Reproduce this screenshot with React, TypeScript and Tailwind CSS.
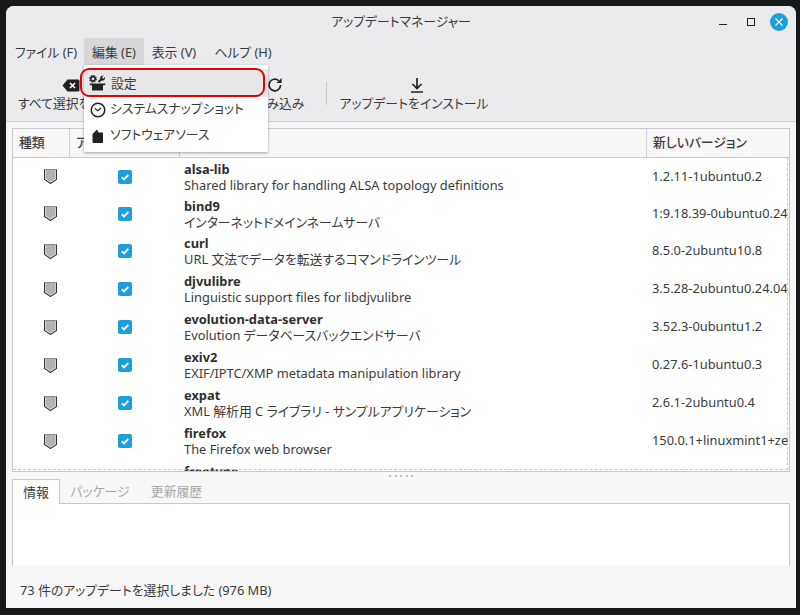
const packages = [
  { name: "alsa-lib", desc: "Shared library for handling ALSA topology definitions", version: "1.2.11-1ubuntu0.2", rowClass: "h-[37px]", textClass: "mt-[1px]" },
  { name: "bind9", desc: "インターネットドメインネームサーバ", version: "1:9.18.39-0ubuntu0.24.04.2", rowClass: "h-[37px]", textClass: "mt-[1px]" },
  { name: "curl", desc: "URL 文法でデータを転送するコマンドラインツール", version: "8.5.0-2ubuntu10.8", rowClass: "h-[38px]", textClass: "mt-[-1px]" },
  { name: "djvulibre", desc: "Linguistic support files for libdjvulibre", version: "3.5.28-2ubuntu0.24.04.1", rowClass: "h-[38px]", textClass: "mt-[-1px]" },
  { name: "evolution-data-server", desc: "Evolution データベースバックエンドサーバ", version: "3.52.3-0ubuntu1.2", rowClass: "h-[38px]", textClass: "mt-[-1px]" },
  { name: "exiv2", desc: "EXIF/IPTC/XMP metadata manipulation library", version: "0.27.6-1ubuntu0.3", rowClass: "h-[38px]", textClass: "mt-[-1px]" },
  { name: "expat", desc: "XML 解析用 C ライブラリ - サンプルアプリケーション", version: "2.6.1-2ubuntu0.4", rowClass: "h-[38px]", textClass: "mt-[-1px]" },
  { name: "firefox", desc: "The Firefox web browser", version: "150.0.1+linuxmint1+zena", rowClass: "h-[38px]", textClass: "mt-[-1px]" },
  { name: "freetype", desc: "FreeType 2 font engine", version: "2.13.2+dfsg-1ubuntu0.1", rowClass: "h-[38px]", textClass: "mt-[-1px]" },
];

const Shield = () => (
  <svg width="13" height="15" viewBox="0 0 13 15">
    <path d="M0.5 0.5 H12.5 V10.5 L6.5 14.5 L0.5 10.5 Z" fill="#fff" />
    <path d="M1.5 1 H11.5 V9.8 L6.5 13 L1.5 9.8 Z" fill="#b2b2b2" />
    <path d="M0.5 0.5 H12.5" stroke="#8c8c8c" strokeWidth="1" />
    <path d="M0.5 0.5 V10.5 L6.5 14.5 L12.5 10.5 V0.5" fill="none" stroke="#333" strokeWidth="1.1" />
  </svg>
);

const Check = () => (
  <div className="flex h-[14px] w-[14px] items-center justify-center rounded-[2px] bg-[#1f9ede]">
    <svg width="10" height="10" viewBox="0 0 10 10">
      <path d="M1.8 5.2 L4.1 7.4 L8.3 2.9" fill="none" stroke="#fff" strokeWidth="1.9" />
    </svg>
  </div>
);

const App = () => {
  return (
    <div className="h-[615px] w-[800px] overflow-hidden bg-[#17181a] pl-[6px] pt-[6px] font-['Noto_Sans','Noto_Sans_CJK_JP',sans-serif] text-[12.85px] text-[#3b3b3b] [font-feature-settings:'palt']">
      <div className="relative flex h-[602px] w-[790px] flex-col overflow-hidden rounded-t-[8px] bg-[#f7f7f7]">
        {/* title + menu + toolbar */}
        <div className="h-[116px] border-b border-[#d0d0d4] bg-[#ebebed]">
          <div className="relative flex h-[32px] items-center justify-center">
            アップデートマネージャー
            <div className="absolute left-[713px] top-[7px] flex items-center">
              <div className="mt-[5px] h-[1.5px] w-[8px] bg-[#222]" />
              <div className="ml-[20px] h-[8px] w-[8px] border-[1.5px] border-[#222]" />
              <div className="ml-[15px] flex h-[18px] w-[18px] items-center justify-center rounded-full bg-[#1f9ede]">
                <svg width="10" height="10" viewBox="0 0 10 10">
                  <path d="M1.5 1.5 L8.5 8.5 M8.5 1.5 L1.5 8.5" stroke="#fff" strokeWidth="1.1" />
                </svg>
              </div>
            </div>
          </div>
          <div className="flex h-[27px] pl-[2px]">
            <div className="flex w-[76px] items-center justify-center pt-[2px]">ファイル (F)</div>
            <div className="flex w-[60px] items-center justify-center bg-[#d7d7d9] pt-[2px]">編集 (E)</div>
            <div className="flex w-[60px] items-center justify-center pt-[2px]">表示 (V)</div>
            <div className="flex w-[78px] items-center justify-center pt-[2px]">ヘルプ (H)</div>
          </div>
          <div className="flex h-[56px] pl-[12px] pt-[11px]">
            <div className="flex w-[108px] flex-col items-center">
              <div className="flex h-[18px] items-center">
                <svg className="mr-[2px]" width="18" height="13" viewBox="0 0 18 13">
                  <path d="M5.5 0.5 H16 a1.5 1.5 0 0 1 1.5 1.5 V11 a1.5 1.5 0 0 1 -1.5 1.5 H5.5 L0.5 6.5 Z" fill="#222" />
                  <path d="M8 4 L13 9 M13 4 L8 9" stroke="#fff" strokeWidth="1.6" />
                </svg>
              </div>
              <div className="mr-[10px] whitespace-nowrap">すべて選択を解除</div>
            </div>
            <div className="ml-[118px] flex w-[60px] flex-col items-center">
              <div className="ml-[2px] flex h-[18px] items-center">
                <svg width="16" height="16" viewBox="0 0 16 16">
                  <path d="M13.6 8 A5.8 5.8 0 1 1 11.6 3.6" fill="none" stroke="#222" strokeWidth="1.7" />
                  <path d="M14.6 0.9 V6 H9.5 Z" fill="#222" />
                </svg>
              </div>
              <div className="mr-[3px] whitespace-nowrap">再読み込み</div>
            </div>
            <div className="ml-[22px] mt-[6px] h-[23px] w-px bg-[#c9c9cc]" />
            <div className="ml-[13px] flex w-[148px] flex-col items-center">
              <div className="ml-[6px] flex h-[18px] items-center">
                <svg width="14" height="17" viewBox="0 0 14 17">
                  <path d="M7 1 V11 M2.5 7 L7 11.5 L11.5 7" fill="none" stroke="#222" strokeWidth="1.7" />
                  <path d="M1 15 H13" stroke="#222" strokeWidth="1.7" />
                </svg>
              </div>
              <div className="whitespace-nowrap">アップデートをインストール</div>
            </div>
          </div>
        </div>

        {/* update list */}
        <div className="mx-[6px] mt-[6px] h-[344px] shrink-0 border border-[#c8c8cc] bg-white">
          <div className="relative h-full overflow-hidden">
            <div className="flex h-[29px] border-b border-[#c8c8cc] bg-[#f7f7f7] font-medium">
              <div className="flex w-[57px] shrink-0 items-center border-r border-[#d0d0d4] pl-[6px]">種類</div>
              <div className="flex w-[110px] shrink-0 items-center border-r border-[#d0d0d4] pl-[6px]">アップグレード</div>
              <div className="flex w-[467px] shrink-0 items-center border-r border-[#d0d0d4] pl-[6px]">パッケージ</div>
              <div className="flex flex-1 items-center pl-[6px]">新しいバージョン</div>
            </div>
            {packages.map((pkg) => (
              <div key={pkg.name} className={`flex items-center whitespace-nowrap ${pkg.rowClass}`}>
                <div className="flex w-[74px] shrink-0 justify-center"><Shield /></div>
                <div className="flex w-[76px] shrink-0 justify-center"><Check /></div>
                <div className={`ml-[21px] w-[467px] shrink-0 leading-[16px] ${pkg.textClass}`}>
                  <div className="font-bold text-[#2e2e2e]">{pkg.name}</div>
                  <div>{pkg.desc}</div>
                </div>
                <div className="min-w-0 flex-1 overflow-hidden pl-[1px]">{pkg.version}</div>
              </div>
            ))}
            <div className="absolute bottom-[1px] left-0 right-[1px] top-[29px] border-b border-r border-dashed border-[#c8c8cc]" />
          </div>
        </div>

        {/* pane handle */}
        <div className="flex h-[7px] shrink-0 items-center justify-center gap-[3.5px]">
          <div className="h-[2px] w-[2px] bg-[#c0c0c0]" />
          <div className="h-[2px] w-[2px] bg-[#c0c0c0]" />
          <div className="h-[2px] w-[2px] bg-[#c0c0c0]" />
          <div className="h-[2px] w-[2px] bg-[#c0c0c0]" />
          <div className="h-[2px] w-[2px] bg-[#c0c0c0]" />
        </div>

        {/* tabs */}
        <div className="mx-[6px] flex h-[25px] shrink-0 border-b border-[#c8c8c8]">
          <div className="flex h-[25px] w-[48px] items-center justify-center border-l border-r border-t border-[#c8c8c8] bg-white pt-[1px]">情報</div>
          <div className="flex w-[80px] items-center justify-center pt-[1px] text-[#a8a8a8]">パッケージ</div>
          <div className="flex w-[73px] items-center justify-center pt-[1px] text-[#a8a8a8]">更新履歴</div>
        </div>
        <div className="mx-[6px] h-[62px] shrink-0 border-l border-r border-[#c8c8c8] bg-white" />

        {/* status */}
        <div className="flex flex-1 items-center pl-[14px] pt-[8px]">73 件のアップデートを選択しました (976 MB)</div>

        {/* edit menu */}
        <div className="absolute left-[78px] top-[59px] w-[184px] rounded-[1px] bg-white pb-[3px] pt-[4px] shadow-[0_1px_3px_rgba(0,0,0,0.35)]">
          <div className="flex h-[28px] items-center bg-[#e7e7e7] pl-[5px]">
            <svg width="17" height="16" viewBox="0 0 17 16" className="mr-[5px]">
              <circle cx="4" cy="3.8" r="2.2" fill="none" stroke="#222" strokeWidth="1.6" />
              <circle cx="4" cy="3.8" r="3.2" fill="none" stroke="#222" strokeWidth="1.3" strokeDasharray="1.5 1" />
              <path d="M8.6 6.5 L11.2 4 A2.8 2.8 0 0 1 14.6 0.6 L13 2.4 L14.3 3.7 L16 2 A2.8 2.8 0 0 1 12.7 5.5 L10.6 7.6 Z" fill="#222" />
              <path d="M0.5 8.5 H16.5 L16 10.3 H14 V15.5 H3 V10.3 H1 Z" fill="#222" />
            </svg>
            <span className="pt-[1px]">設定</span>
          </div>
          <div className="flex h-[26px] items-center pl-[6px]">
            <svg width="16" height="16" viewBox="0 0 16 16" className="mr-[4px]">
              <circle cx="8" cy="8" r="6.8" fill="none" stroke="#222" strokeWidth="1.5" />
              <path d="M4.8 6.6 L7.8 8.8 L11 6" fill="none" stroke="#222" strokeWidth="1.2" />
            </svg>
            <span className="pb-[2px]">システムスナップショット</span>
          </div>
          <div className="flex h-[26px] items-center pl-[6px]">
            <svg width="16" height="16" viewBox="0 0 16 16" className="mr-[4px]">
              <path d="M2.5 6 L7 1.5 L8.5 4.5 H13 V14 A1 1 0 0 1 12 15 H3.5 A1 1 0 0 1 2.5 14 Z" fill="#222" />
            </svg>
            <span className="pb-[2px]">ソフトウェアソース</span>
          </div>
        </div>
        <div className="absolute left-[74px] top-[62px] h-[29px] w-[185px] rounded-[9px] border-[2.5px] border-[#e80000]" />
      </div>
    </div>
  );
};

export default App;
